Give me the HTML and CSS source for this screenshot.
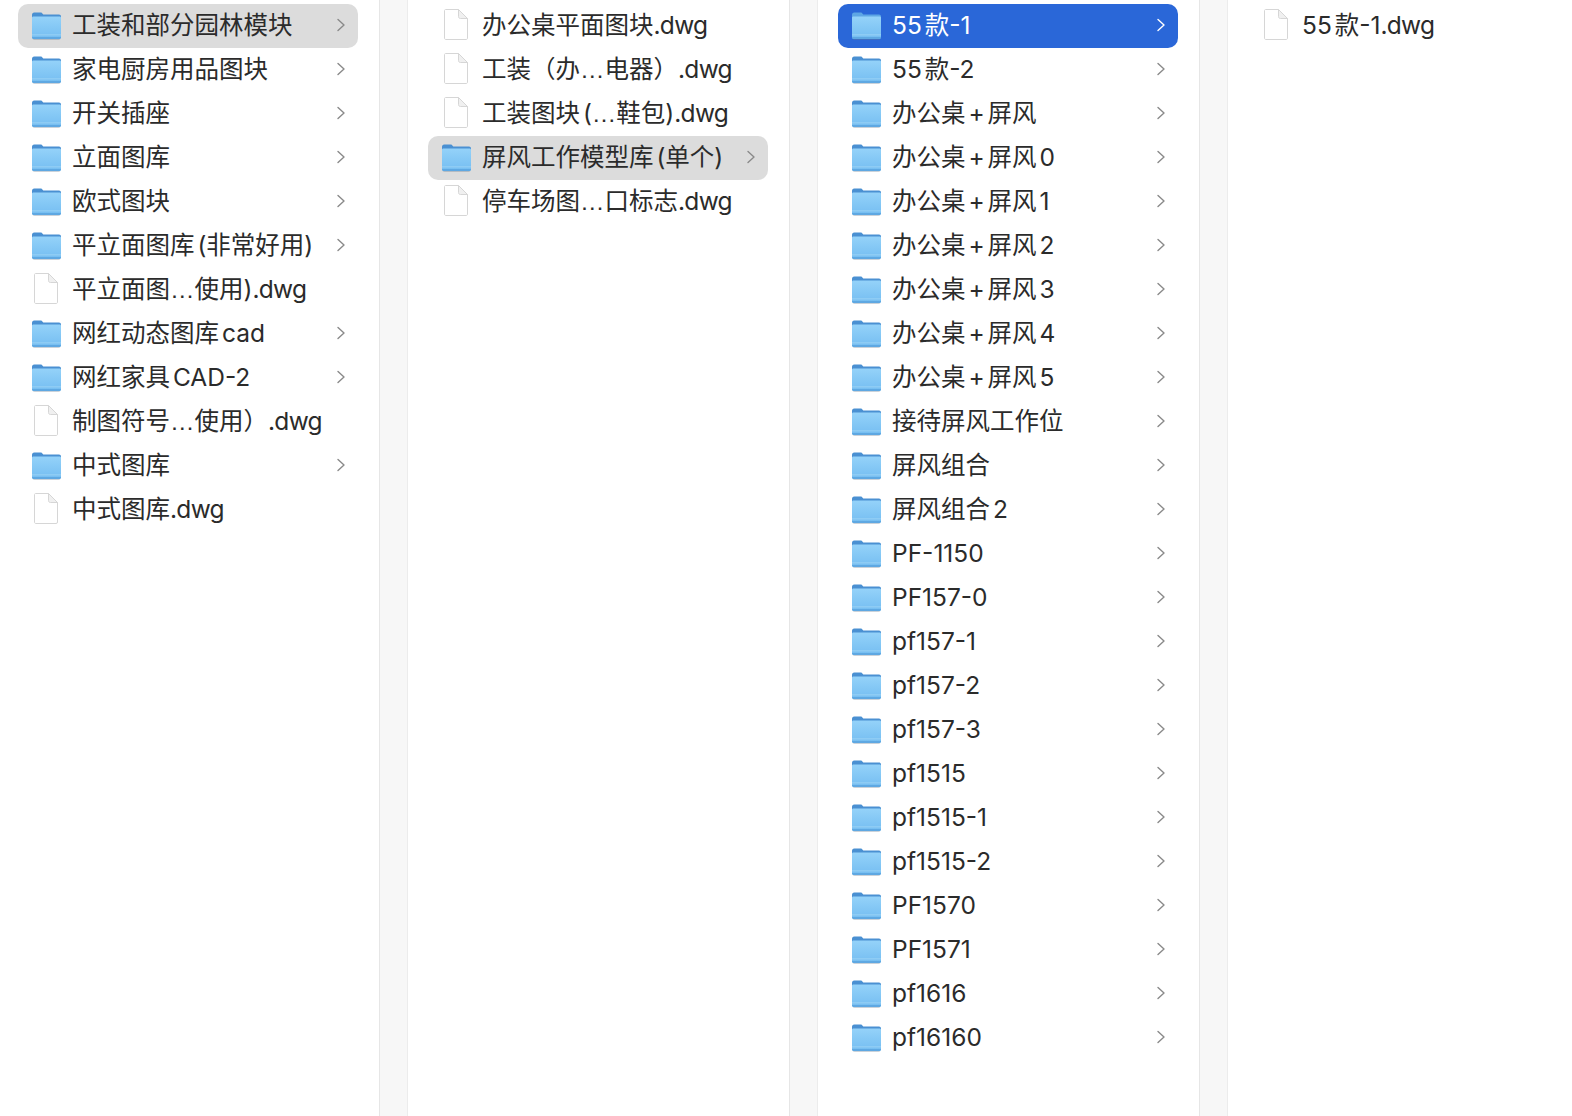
FILE: index.html
```html
<!DOCTYPE html>
<html lang="zh">
<head>
<meta charset="utf-8">
<title>Finder</title>
<link rel="stylesheet" href="styles.css">
</head>
<body>
<svg class="defs" width="0" height="0" aria-hidden="true">
  <defs>
    <linearGradient id="fg" x1="0" y1="0" x2="0" y2="1">
      <stop offset="0" stop-color="#94d2f9"/>
      <stop offset="1" stop-color="#74bdf1"/>
    </linearGradient>
    <symbol id="folder" viewBox="0 0 30 28">
      <rect x="1.500" y="5" width="28" height="23" rx="2" fill="#6b7f92" opacity=".35"/>
      <path d="M1 3C1 1.500 1.800 .5 3.200 .5H9.500C10.500 .5 11 .9 11.600 1.700L12.300 2.500H28C29.200 2.500 30 3.300 30 4.500V10H1Z" style="fill: var(--folder-tab)"/>
      <path d="M1 6C1 5 1.500 4.500 2.400 4.500H28.600C29.500 4.500 30 5 30 6V25C30 26.200 29.200 27 28 27H3C1.800 27 1 26.200 1 25Z" fill="url(#fg)"/>
      <rect x="1" y="22.500" width="29" height=".8" fill="#b4e0fb" opacity=".7"/>
      <path d="M1 25V25.200C1 26.300 1.800 27 3 27H28C29.200 27 30 26.300 30 25.200V25Z" fill="#5fa8e2"/>
    </symbol>
    <symbol id="file" viewBox="0 1 26 32">
      <path d="M2.500 1.500H15.500L24.500 10.500V30C24.500 31 24 31.500 23 31.500H3C2 31.500 1.500 31 1.500 30V2.500C1.500 2 2 1.500 2.500 1.500Z" fill="#fff" stroke="#d6d6d6"/>
      <path d="M15.500 1.500V8.500C15.500 9.800 16.200 10.500 17.500 10.500H24.500Z" fill="#f0f0f0" stroke="#d6d6d6"/>
    </symbol>
    <symbol id="chev" viewBox="0 0 10 14">
      <path d="M2 1.500L8 7L2 12.500" fill="none" stroke="currentColor" stroke-width="1.400" stroke-linecap="round" stroke-linejoin="round"/>
    </symbol>
  </defs>
</svg>
<main class="browser">
  <section class="column">
    <div class="row hl"><svg class="ic-folder"><use href="#folder"/></svg><span class="name">工装和部分园林模块</span><svg class="chev"><use href="#chev"/></svg></div>
    <div class="row"><svg class="ic-folder"><use href="#folder"/></svg><span class="name">家电厨房用品图块</span><svg class="chev"><use href="#chev"/></svg></div>
    <div class="row"><svg class="ic-folder"><use href="#folder"/></svg><span class="name">开关插座</span><svg class="chev"><use href="#chev"/></svg></div>
    <div class="row"><svg class="ic-folder"><use href="#folder"/></svg><span class="name">立面图库</span><svg class="chev"><use href="#chev"/></svg></div>
    <div class="row"><svg class="ic-folder"><use href="#folder"/></svg><span class="name">欧式图块</span><svg class="chev"><use href="#chev"/></svg></div>
    <div class="row"><svg class="ic-folder"><use href="#folder"/></svg><span class="name">平立面图库 (非常好用)</span><svg class="chev"><use href="#chev"/></svg></div>
    <div class="row"><svg class="ic-file"><use href="#file"/></svg><span class="name">平立面图<span class="ell">…</span>使用)<span class="ext">.dwg</span></span></div>
    <div class="row"><svg class="ic-folder"><use href="#folder"/></svg><span class="name">网红动态图库 cad</span><svg class="chev"><use href="#chev"/></svg></div>
    <div class="row"><svg class="ic-folder"><use href="#folder"/></svg><span class="name">网红家具 CAD-2</span><svg class="chev"><use href="#chev"/></svg></div>
    <div class="row"><svg class="ic-file"><use href="#file"/></svg><span class="name">制图符号<span class="ell">…</span>使用）<span class="ext">.dwg</span></span></div>
    <div class="row"><svg class="ic-folder"><use href="#folder"/></svg><span class="name">中式图库</span><svg class="chev"><use href="#chev"/></svg></div>
    <div class="row"><svg class="ic-file"><use href="#file"/></svg><span class="name">中式图库<span class="ext">.dwg</span></span></div>
  </section>
  <section class="column">
    <div class="row"><svg class="ic-file"><use href="#file"/></svg><span class="name">办公桌平面图块<span class="ext">.dwg</span></span></div>
    <div class="row"><svg class="ic-file"><use href="#file"/></svg><span class="name">工装（办<span class="ell">…</span>电器）<span class="ext">.dwg</span></span></div>
    <div class="row"><svg class="ic-file"><use href="#file"/></svg><span class="name">工装图块 (<span class="ell">…</span>鞋包)<span class="ext">.dwg</span></span></div>
    <div class="row hl"><svg class="ic-folder"><use href="#folder"/></svg><span class="name">屏风工作模型库 (单个)</span><svg class="chev"><use href="#chev"/></svg></div>
    <div class="row"><svg class="ic-file"><use href="#file"/></svg><span class="name">停车场图<span class="ell">…</span>口标志<span class="ext">.dwg</span></span></div>
  </section>
  <section class="column">
    <div class="row active"><svg class="ic-folder"><use href="#folder"/></svg><span class="name">55 款-1</span><svg class="chev"><use href="#chev"/></svg></div>
    <div class="row"><svg class="ic-folder"><use href="#folder"/></svg><span class="name">55 款-2</span><svg class="chev"><use href="#chev"/></svg></div>
    <div class="row"><svg class="ic-folder"><use href="#folder"/></svg><span class="name">办公桌 + 屏风</span><svg class="chev"><use href="#chev"/></svg></div>
    <div class="row"><svg class="ic-folder"><use href="#folder"/></svg><span class="name">办公桌 + 屏风 0</span><svg class="chev"><use href="#chev"/></svg></div>
    <div class="row"><svg class="ic-folder"><use href="#folder"/></svg><span class="name">办公桌 + 屏风 1</span><svg class="chev"><use href="#chev"/></svg></div>
    <div class="row"><svg class="ic-folder"><use href="#folder"/></svg><span class="name">办公桌 + 屏风 2</span><svg class="chev"><use href="#chev"/></svg></div>
    <div class="row"><svg class="ic-folder"><use href="#folder"/></svg><span class="name">办公桌 + 屏风 3</span><svg class="chev"><use href="#chev"/></svg></div>
    <div class="row"><svg class="ic-folder"><use href="#folder"/></svg><span class="name">办公桌 + 屏风 4</span><svg class="chev"><use href="#chev"/></svg></div>
    <div class="row"><svg class="ic-folder"><use href="#folder"/></svg><span class="name">办公桌 + 屏风 5</span><svg class="chev"><use href="#chev"/></svg></div>
    <div class="row"><svg class="ic-folder"><use href="#folder"/></svg><span class="name">接待屏风工作位</span><svg class="chev"><use href="#chev"/></svg></div>
    <div class="row"><svg class="ic-folder"><use href="#folder"/></svg><span class="name">屏风组合</span><svg class="chev"><use href="#chev"/></svg></div>
    <div class="row"><svg class="ic-folder"><use href="#folder"/></svg><span class="name">屏风组合 2</span><svg class="chev"><use href="#chev"/></svg></div>
    <div class="row"><svg class="ic-folder"><use href="#folder"/></svg><span class="name">PF-1150</span><svg class="chev"><use href="#chev"/></svg></div>
    <div class="row"><svg class="ic-folder"><use href="#folder"/></svg><span class="name">PF157-0</span><svg class="chev"><use href="#chev"/></svg></div>
    <div class="row"><svg class="ic-folder"><use href="#folder"/></svg><span class="name">pf157-1</span><svg class="chev"><use href="#chev"/></svg></div>
    <div class="row"><svg class="ic-folder"><use href="#folder"/></svg><span class="name">pf157-2</span><svg class="chev"><use href="#chev"/></svg></div>
    <div class="row"><svg class="ic-folder"><use href="#folder"/></svg><span class="name">pf157-3</span><svg class="chev"><use href="#chev"/></svg></div>
    <div class="row"><svg class="ic-folder"><use href="#folder"/></svg><span class="name">pf1515</span><svg class="chev"><use href="#chev"/></svg></div>
    <div class="row"><svg class="ic-folder"><use href="#folder"/></svg><span class="name">pf1515-1</span><svg class="chev"><use href="#chev"/></svg></div>
    <div class="row"><svg class="ic-folder"><use href="#folder"/></svg><span class="name">pf1515-2</span><svg class="chev"><use href="#chev"/></svg></div>
    <div class="row"><svg class="ic-folder"><use href="#folder"/></svg><span class="name">PF1570</span><svg class="chev"><use href="#chev"/></svg></div>
    <div class="row"><svg class="ic-folder"><use href="#folder"/></svg><span class="name">PF1571</span><svg class="chev"><use href="#chev"/></svg></div>
    <div class="row"><svg class="ic-folder"><use href="#folder"/></svg><span class="name">pf1616</span><svg class="chev"><use href="#chev"/></svg></div>
    <div class="row"><svg class="ic-folder"><use href="#folder"/></svg><span class="name">pf16160</span><svg class="chev"><use href="#chev"/></svg></div>
  </section>
  <section class="column last">
    <div class="row"><svg class="ic-file"><use href="#file"/></svg><span class="name">55 款-1<span class="ext">.dwg</span></span></div>
  </section>
</main>
</body>
</html>
```
FILE: styles.css
```css
html, body {
  margin: 0;
  padding: 0;
  height: 100%;
  background: #fff;
  overflow: hidden;
}

.defs {
  position: absolute;
}

.browser {
  display: flex;
  height: 1116px;
  background: #f7f7f7;
  font-family: "Inter", "Noto Sans CJK SC", sans-serif;
  font-size: 24.500px;
  word-spacing: -4px;
  color: #2b2b2b;
}

.column {
  box-sizing: border-box;
  width: 380px;
  flex: none;
  padding: 4px 21px 0 18px;
  background: #fff;
  border-right: 1px solid #e6e6e6;
}

.column + .column {
  width: 383px;
  margin-left: 27px;
  padding-left: 20px;
  border-left: 1px solid #ececec;
}

.column.last {
  flex: 1;
  border-right: 0;
}

.row {
  --folder-tab: #4a90d2;
  display: flex;
  align-items: center;
  box-sizing: border-box;
  width: 340px;
  height: 44px;
  padding: 0 13px;
  border-radius: 10px;
}

.hl {
  background: #dcdcdc;
}

.active {
  --folder-tab: #5da6e4;
  background: #2a67d8;
  color: #fff;
}

.active .chev {
  color: #fff;
}

.ic-folder {
  width: 30px;
  height: 28px;
  flex: none;
  margin-right: 11px;
}

.ic-file {
  width: 26px;
  height: 32px;
  flex: none;
  margin: 0 13px 2px 2px;
}

.name {
  flex: 1;
  padding-bottom: 2px;
  white-space: nowrap;
  line-height: 42px;
}

.ell {
  font-family: "Liberation Sans", sans-serif;
}

.ext {
  letter-spacing: -0.7px;
}

.chev {
  width: 10px;
  height: 14px;
  flex: none;
  margin: 0 -1px 2px 1px;
  color: #8a8a8a;
}
```
